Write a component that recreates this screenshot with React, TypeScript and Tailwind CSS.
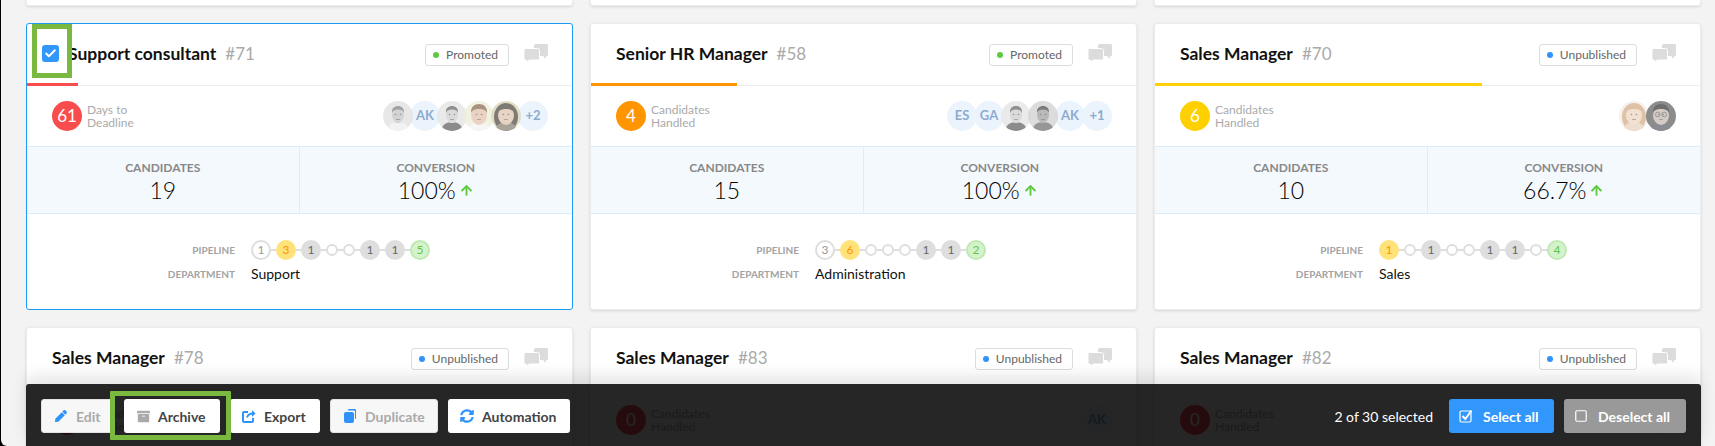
import { Check, ArrowUp, Square } from "lucide-react";
import { FaPen, FaArchive, FaSyncAlt } from "react-icons/fa";

type Face = { bg: string; skin: string; hair: string; shirt: string; long?: boolean; glasses?: boolean; close?: boolean };
type Step = [string, "white" | "yellow" | "gray" | "empty" | "green"];
type Job = {
  title: string;
  id: number;
  status: "Promoted" | "Unpublished";
  count: number;
  label: [string, string];
  color: string;
  progress: number;
  avatars: (string | Face)[];
  candidates?: number;
  conversion?: string;
  pipeline?: Step[];
  department?: string;
  selected?: boolean;
};

const man: Face = { bg: "#e2e2e2", skin: "#c9c9c9", hair: "#8c8c8c", shirt: "#f0f0f0" };
const bald: Face = { bg: "#e6e6e6", skin: "#d2d2d2", hair: "#757575", shirt: "#6f6f6f" };
const guy: Face = { bg: "#eff0dc", skin: "#e6c8b4", hair: "#94795f", shirt: "#f4f4f4", close: true };
const girl: Face = { bg: "#dcd8ba", skin: "#e2cab6", hair: "#5f5b52", shirt: "#938e80", long: true, close: true };
const beard: Face = { bg: "#d4d4d4", skin: "#a8a8a8", hair: "#5c5c5c", shirt: "#7c7c7c" };
const blonde: Face = { bg: "#f2eeea", skin: "#efd9c9", hair: "#d8b391", shirt: "#e9d6c4", long: true, close: true };
const older: Face = { bg: "#707070", skin: "#cbc0ba", hair: "#4a4a4a", shirt: "#6c7078", glasses: true, close: true };

const rowOne: Job[] = [
  {
    title: "Support consultant",
    id: 71,
    status: "Promoted",
    count: 61,
    label: ["Days to", "Deadline"],
    color: "bg-[#f94c4c]",
    progress: 51,
    avatars: [man, "AK", bald, guy, girl, "+2"],
    candidates: 19,
    conversion: "100%",
    pipeline: [["1", "white"], ["3", "yellow"], ["1", "gray"], ["", "empty"], ["", "empty"], ["1", "gray"], ["1", "gray"], ["5", "green"]],
    department: "Support",
    selected: true,
  },
  {
    title: "Senior HR Manager",
    id: 58,
    status: "Promoted",
    count: 4,
    label: ["Candidates", "Handled"],
    color: "bg-[#ff9500]",
    progress: 146,
    avatars: ["ES", "GA", bald, beard, "AK", "+1"],
    candidates: 15,
    conversion: "100%",
    pipeline: [["3", "white"], ["6", "yellow"], ["", "empty"], ["", "empty"], ["", "empty"], ["1", "gray"], ["1", "gray"], ["2", "green"]],
    department: "Administration",
  },
  {
    title: "Sales Manager",
    id: 70,
    status: "Unpublished",
    count: 6,
    label: ["Candidates", "Handled"],
    color: "bg-[#ffd000]",
    progress: 327,
    avatars: [blonde, older],
    candidates: 10,
    conversion: "66.7%",
    pipeline: [["1", "yellow"], ["", "empty"], ["1", "gray"], ["", "empty"], ["", "empty"], ["1", "gray"], ["1", "gray"], ["", "empty"], ["4", "green"]],
    department: "Sales",
  },
];

const rowTwo: Job[] = [78, 83, 82].map((id) => ({
  title: "Sales Manager",
  id,
  status: "Unpublished",
  count: 0,
  label: ["Candidates", "Handled"],
  color: "bg-[#f94c4c]",
  progress: 0,
  avatars: ["AK"],
}));

const stepStyles = {
  white: "h-5 w-5 border-2 border-[#dedede] bg-white text-[#999]",
  yellow: "h-5 w-5 bg-[#ffe27a] text-[#ff9500]",
  gray: "h-5 w-5 bg-[#dedede] text-[#666]",
  empty: "h-3 w-3 border-2 border-[#dedede] bg-white",
  green: "h-5 w-5 border-2 border-[#bfe9b2] bg-[#d6f2cd] text-[#5cc93f]",
};

function Photo({ face }: { face: Face }) {
  const rx = face.close ? 8 : 6;
  const ry = face.close ? 10 : 7.5;
  return (
    <svg viewBox="0 0 30 30" className="h-[30px] w-[30px] shrink-0 rounded-full opacity-80 blur-[0.4px]">
      <rect width="30" height="30" fill={face.bg} />
      {face.long && <ellipse cx="15" cy="16" rx="12" ry="14" fill={face.hair} />}
      <path d="M4 30c1-7 6-9 11-9s10 2 11 9z" fill={face.shirt} />
      <rect x="12.5" y="16" width="5" height="6" fill={face.skin} />
      <ellipse cx="15" cy="14" rx={rx} ry={ry} fill={face.skin} />
      <path d={face.close ? "M7 12c-.5-6 3.500-9 8-9s8.500 3 8 9c-1-3-4-4-8-4s-7 1-8 4z" : "M9 12c-.5-5 2.500-7 6-7s6.500 2 6 7c-1-3-3-3.500-6-3.500S10 9 9 12z"} fill={face.hair} />
      <g fill="#555" opacity="0.7">
        <circle cx="12.500" cy="13.500" r="0.8" />
        <circle cx="17.500" cy="13.500" r="0.8" />
        <rect x="13" y="18" width="4" height="0.8" rx="0.4" />
      </g>
      {face.glasses && (
        <g fill="none" stroke="#555" strokeWidth="0.6">
          <circle cx="11.800" cy="13.500" r="2.400" />
          <circle cx="18.200" cy="13.500" r="2.400" />
        </g>
      )}
    </svg>
  );
}

function CommentIcon() {
  return (
    <svg viewBox="0 0 24 19" className="h-[19px] w-6 fill-[#dcdcdc]">
      <path d="M10 1.500A1.500 1.500 0 0 1 11.500 0h11A1.500 1.500 0 0 1 24 1.500v9a1.500 1.500 0 0 1-1.500 1.500h-.500v3l-3-3h-8a1.500 1.500 0 0 1-1.500-1.500z" />
      <path
        d="M1.500 4.500h12a2 2 0 0 1 2 2v8a1.500 1.500 0 0 1-1.500 1.500H5l-2.500 3v-3h-1A1.500 1.500 0 0 1 0 14.500V6a1.500 1.500 0 0 1 1.500-1.500z"
        stroke="#fff"
        strokeWidth="1"
      />
    </svg>
  );
}

function ExportIcon() {
  return (
    <svg viewBox="0 0 14 14" className="h-[14px] w-[14px] text-[#2f93fb]" fill="none" stroke="currentColor" strokeWidth="2">
      <path d="M6 3H2a1 1 0 0 0-1 1v8a1 1 0 0 0 1 1h8a1 1 0 0 0 1-1V9" />
      <path d="M5 8.500C6 5.500 8 4.500 11 4.500" />
      <path d="M10 1l3.500 3.500L10 8z" fill="currentColor" stroke="none" />
    </svg>
  );
}

function DuplicateIcon() {
  return (
    <svg viewBox="0 0 12 14" className="h-[14px] w-3 fill-[#2f93fb]">
      <path d="M4 .5A1 1 0 0 1 5 0h6a1 1 0 0 1 1 1v8a1 1 0 0 1-1 1V2.500A1 1 0 0 0 10 1.500H4z" />
      <rect x="0" y="3" width="10" height="11" rx="2" />
    </svg>
  );
}

function SelectAllIcon() {
  return (
    <svg viewBox="0 0 14 14" className="mr-[10px] h-[14px] w-[14px]" fill="none" stroke="currentColor">
      <rect x="1" y="2" width="11" height="11" rx="1.500" strokeWidth="1.200" />
      <path d="M3.500 7l2.800 3L12.500 1.500" strokeWidth="2" />
    </svg>
  );
}

function Pipeline({ steps }: { steps: Step[] }) {
  return (
    <div className="flex items-center">
      {steps.map(([n, kind], i) => (
        <div key={i} className="flex items-center">
          {i > 0 && <div className="h-[2px] w-[5px] bg-[#dedede]" />}
          <div className={`flex items-center justify-center rounded-full text-[12px] ${stepStyles[kind]}`}>{n}</div>
        </div>
      ))}
    </div>
  );
}

function JobCard({ job }: { job: Job }) {
  const dot = job.status === "Promoted" ? "bg-[#5cc93f]" : "bg-[#2f93fb]";
  return (
    <div
      className={`relative rounded-[3px] border bg-white ${
        job.selected ? "border-[#1e9bf5]" : "border-[#ececec] shadow-[0_1px_3px_rgba(0,0,0,0.12)]"
      }`}
    >
      {job.selected && (
        <div className="absolute left-[5px] top-0 z-10 flex h-[54px] w-10 items-center justify-center border-[5px] border-[#7ab93f] pr-[4px] pt-[5px]">
          <div className="flex h-[17px] w-[17px] items-center justify-center rounded-[3px] bg-[#3297fd]">
            <Check className="h-[13px] w-[13px] text-white" strokeWidth={3.5} />
          </div>
        </div>
      )}
      <div className="relative flex h-[62px] items-center border-b border-[#eeeeee] pl-[25px] pr-[24px]">
        <div className={`flex items-baseline gap-[9px] text-[17px] ${job.selected ? "ml-[16px]" : ""}`}>
          <span className="text-[17.5px] font-bold text-[#111]">{job.title}</span>
          <span className="text-[#aaa]">#{job.id}</span>
        </div>
        <div className="ml-auto flex h-[22px] items-center rounded-[3px] border border-[#dddddd] pl-[7px] pr-[10px] text-[12px] text-[#666]">
          <span className={`mr-[7px] h-[6px] w-[6px] rounded-full ${dot}`} />
          {job.status}
        </div>
        <div className="ml-[15px] mt-[-2px]">
          <CommentIcon />
        </div>
        {job.progress > 0 && (
          <div className={`absolute bottom-[-1px] left-0 h-[3px] ${job.color}`} style={{ width: job.progress }} />
        )}
      </div>
      <div className="flex h-[60px] items-center pl-[25px] pr-[24px]">
        <div className={`flex h-[30px] min-w-[30px] items-center justify-center rounded-full px-[2px] text-[17px] text-white ${job.color}`}>
          {job.count}
        </div>
        <div className="ml-[5px] text-[12px] leading-[13px] text-[#aaa]">
          <div>{job.label[0]}</div>
          <div>{job.label[1]}</div>
        </div>
        <div className="ml-auto flex -space-x-[3px]">
          {job.avatars.map((a, i) =>
            typeof a === "string" ? (
              <div
                key={i}
                className="flex h-[30px] w-[30px] items-center justify-center rounded-full bg-[#ebf4fd] text-[13px] font-bold text-[#8dabcf]"
              >
                {a}
              </div>
            ) : (
              <Photo key={i} face={a} />
            )
          )}
        </div>
      </div>
      {job.pipeline && (
        <>
          <div className="grid h-[68px] grid-cols-2 border-y border-[#dcecfb] bg-[#f4f9fe]">
            {[
              ["CANDIDATES", String(job.candidates), false],
              ["CONVERSION", job.conversion, true],
            ].map(([name, value, arrow], i) => (
              <div key={i} className={`flex flex-col items-center pt-[14px] ${i === 0 ? "border-r border-[#dcecfb]" : ""}`}>
                <div className="text-[12px] font-bold leading-[14px] text-[#888]">{name}</div>
                <div className="mt-[1px] flex items-center text-[23px] font-light leading-[28px] text-black">
                  {value}
                  {arrow && <ArrowUp className="ml-[3px] h-[15px] w-[15px] text-[#5cc93f]" strokeWidth={3} />}
                </div>
              </div>
            ))}
          </div>
          <div className="grid h-[95px] grid-cols-[183px_1fr] content-start items-center gap-x-4 gap-y-[4px] pl-[25px] pt-[26px]">
            <div className="text-right text-[10px] font-bold text-[#a3a3a3]">PIPELINE</div>
            <Pipeline steps={job.pipeline} />
            <div className="text-right text-[10px] font-bold text-[#a3a3a3]">DEPARTMENT</div>
            <div className="text-[14px] leading-[20px] text-[#111]">{job.department}</div>
          </div>
        </>
      )}
    </div>
  );
}

function ActionButton({
  icon,
  label,
  width,
  disabled,
}: {
  icon: React.ReactNode;
  label: string;
  width: string;
  disabled?: boolean;
}) {
  return (
    <button
      className={`flex h-[34px] items-center rounded-[3px] pl-[12px] text-[14px] font-bold ${width} ${
        disabled ? "border border-[#e2e2e2] bg-[#f7f7f7] text-[#aaa]" : "bg-white text-[#444]"
      }`}
    >
      <span className="mr-[8px] flex w-[14px] justify-center">{icon}</span>
      {label}
    </button>
  );
}

export default function App() {
  return (
    <div className="relative h-[446px] w-[1715px] overflow-hidden bg-black font-['Lato',sans-serif]">
      <div className="ml-[1px] h-full rounded-bl-[6px] bg-[#f3f3f3] pl-[25px]">
        <div className="grid grid-cols-[repeat(3,547px)] gap-[17px]">
          {[0, 1, 2].map((i) => (
            <div key={i} className="h-[6px] rounded-b-[3px] border-x border-b border-[#ececec] bg-white shadow-[0_1px_3px_rgba(0,0,0,0.12)]" />
          ))}
          {rowOne.map((job) => (
            <JobCard key={job.id} job={job} />
          ))}
          {rowTwo.map((job) => (
            <JobCard key={job.id} job={job} />
          ))}
        </div>
      </div>

      <div className="absolute bottom-0 left-[26px] flex h-[62px] w-[1675px] items-start rounded-t-[3px] bg-black/85 px-[15px] pt-[15px] shadow-[0_-8px_16px_rgba(0,0,0,0.1)]">
        <div className="flex gap-[10px]">
          <ActionButton icon={<FaPen className="h-3 w-3 text-[#2f93fb]" />} label="Edit" width="w-[73px]" disabled />
          <ActionButton icon={<FaArchive className="h-[13px] w-[13px] text-[#aaa]" />} label="Archive" width="w-[96px]" />
          <ActionButton icon={<ExportIcon />} label="Export" width="w-[90px]" />
          <ActionButton icon={<DuplicateIcon />} label="Duplicate" width="w-[108px]" disabled />
          <ActionButton icon={<FaSyncAlt className="h-[14px] w-[14px] text-[#2f93fb]" />} label="Automation" width="w-[122px]" />
        </div>
        <div className="ml-auto flex items-center">
          <span className="mr-[16px] text-[14px] text-white">2 of 30 selected</span>
          <button className="flex h-[34px] w-[105px] items-center rounded-[3px] bg-[#3297fd] pl-[10px] text-[14px] font-bold text-white">
            <SelectAllIcon />
            Select all
          </button>
          <button className="ml-[10px] flex h-[34px] w-[122px] items-center rounded-[3px] bg-[#999] pl-[10px] text-[14px] font-bold text-white">
            <Square className="mr-[10px] h-[14px] w-[14px]" />
            Deselect all
          </button>
        </div>
      </div>

      <div className="absolute left-[110px] top-[391px] h-[49px] w-[121px] rounded-[1px] border-[5px] border-[#7ab93f]" />
    </div>
  );
}
